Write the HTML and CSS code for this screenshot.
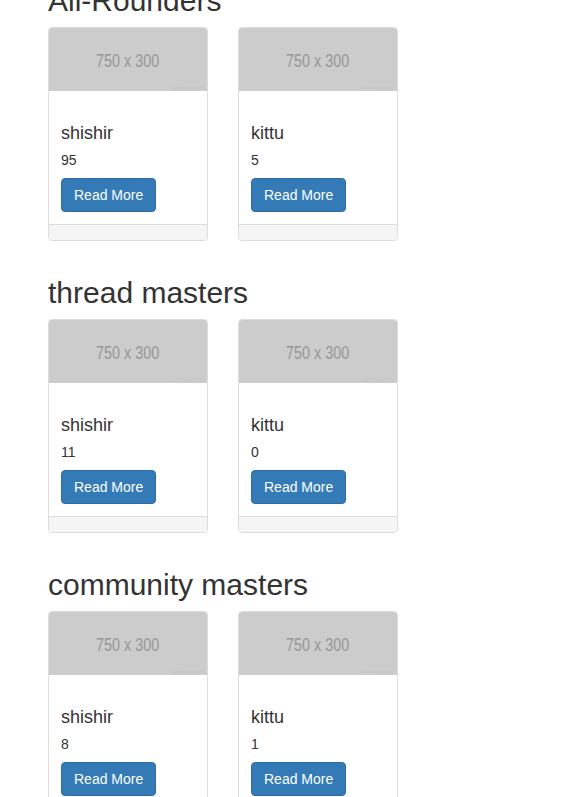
FILE: index.html
```html
<!DOCTYPE html>
<html>
<head>
<meta charset="utf-8">
<link rel="stylesheet" href="styles.css">
</head>
<body>
<div class="page">
  <section class="group">
    <h2 class="group-title">All-Rounders</h2>
    <div class="cards">
      <div class="card">
        <div class="thumb"><span class="thumb-label">750 x 300</span><span class="thumb-credit">powered by placehold.it</span></div>
        <div class="caption">
          <h4 class="name">shishir</h4>
          <p class="score">95</p>
          <a class="btn">Read More</a>
        </div>
        <div class="footer"></div>
      </div>
      <div class="card">
        <div class="thumb"><span class="thumb-label">750 x 300</span><span class="thumb-credit">powered by placehold.it</span></div>
        <div class="caption">
          <h4 class="name">kittu</h4>
          <p class="score">5</p>
          <a class="btn">Read More</a>
        </div>
        <div class="footer"></div>
      </div>
    </div>
  </section>
  <section class="group">
    <h2 class="group-title">thread masters</h2>
    <div class="cards">
      <div class="card">
        <div class="thumb"><span class="thumb-label">750 x 300</span><span class="thumb-credit">powered by placehold.it</span></div>
        <div class="caption">
          <h4 class="name">shishir</h4>
          <p class="score">11</p>
          <a class="btn">Read More</a>
        </div>
        <div class="footer"></div>
      </div>
      <div class="card">
        <div class="thumb"><span class="thumb-label">750 x 300</span><span class="thumb-credit">powered by placehold.it</span></div>
        <div class="caption">
          <h4 class="name">kittu</h4>
          <p class="score">0</p>
          <a class="btn">Read More</a>
        </div>
        <div class="footer"></div>
      </div>
    </div>
  </section>
  <section class="group">
    <h2 class="group-title">community masters</h2>
    <div class="cards">
      <div class="card">
        <div class="thumb"><span class="thumb-label">750 x 300</span><span class="thumb-credit">powered by placehold.it</span></div>
        <div class="caption">
          <h4 class="name">shishir</h4>
          <p class="score">8</p>
          <a class="btn">Read More</a>
        </div>
        <div class="footer"></div>
      </div>
      <div class="card">
        <div class="thumb"><span class="thumb-label">750 x 300</span><span class="thumb-credit">powered by placehold.it</span></div>
        <div class="caption">
          <h4 class="name">kittu</h4>
          <p class="score">1</p>
          <a class="btn">Read More</a>
        </div>
        <div class="footer"></div>
      </div>
    </div>
  </section>
</div>
</body>
</html>
```

FILE: styles.css
```css
html, body {
  margin: 0;
  padding: 0;
  background: #fff;
}
body {
  font-family: "Liberation Sans", Arial, Helvetica, sans-serif;
  font-size: 14px;
  line-height: 20px;
  color: #333;
  overflow: hidden;
}
.page {
  padding-left: 48px;
  margin-top: -17px;
}
.group {
  margin-bottom: 34px;
}
.group-title {
  margin: 0 0 10px;
  padding-top: 1px;
  font-size: 30px;
  line-height: 33px;
  font-weight: 400;
  color: #333;
}
.cards {
  display: flex;
  gap: 30px;
}
.card {
  width: 158px;
  border: 1px solid #ddd;
  border-radius: 4px;
  background: #fff;
  overflow: hidden;
}
.thumb {
  position: relative;
  height: 63px;
  background: #ccc;
  display: flex;
  align-items: center;
  justify-content: center;
}
.thumb-label {
  display: inline-block;
  font-size: 18px;
  line-height: 18px;
  color: #969696;
  transform: scaleX(0.8);
  margin-top: 3px;
}
.thumb-credit {
  position: absolute;
  right: 3px;
  bottom: 1px;
  font-size: 3px;
  line-height: 4px;
  color: #c2c2c2;
}
.caption {
  padding: 32px 12px 12px;
}
.name {
  margin: 0;
  font-size: 18px;
  line-height: 20px;
  font-weight: 400;
  color: #333;
}
.score {
  margin: 7px 0 8px;
  font-size: 14px;
  line-height: 20px;
}
.btn {
  display: inline-block;
  padding: 6px 12px;
  font-size: 14px;
  line-height: 20px;
  color: #fff;
  background: #337ab7;
  border: 1px solid #2e6da4;
  border-radius: 4px;
  text-decoration: none;
}
.footer {
  height: 15px;
  background: #f5f5f5;
  border-top: 1px solid #ddd;
}
```
